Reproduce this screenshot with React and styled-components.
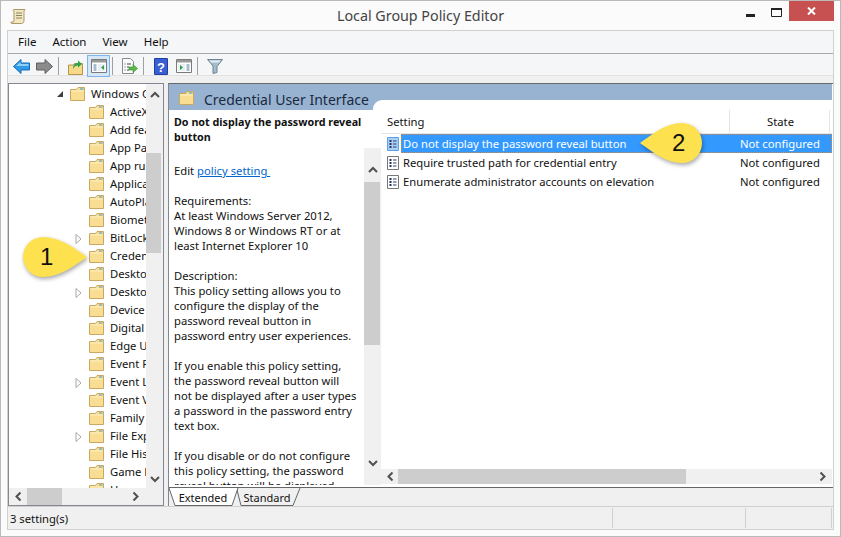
import React from 'react';
import styled, { createGlobalStyle } from 'styled-components';

const GlobalStyle = createGlobalStyle`
  html, body { margin: 0; padding: 0; background: #fff; }
  body { font-family: "Noto Sans", "Open Sans", sans-serif; font-size: 11.25px; color: #111; }
  * { box-sizing: border-box; }
`;

const Window = styled.div`
  position: relative;
  width: 841px;
  height: 537px;
  display: flex;
  flex-direction: column;
  border: 1px solid #bababa;
  background: #fbfbfb;
  overflow: hidden;
`;

const TitleBar = styled.div`
  position: relative;
  height: 29px;
  flex: none;
  display: flex;
  align-items: center;
  justify-content: center;
  font-size: 14.3px;
  color: #444;
`;

const TitleIcon = styled.svg`
  position: absolute;
  left: 9px;
  top: 7px;
`;

const WindowControls = styled.div`
  position: absolute;
  top: 0;
  right: 6px;
  display: flex;
  height: 20px;
`;

const ControlButton = styled.div`
  width: ${p => p.$w}px;
  display: flex;
  align-items: center;
  justify-content: center;
  background: ${p => p.$close ? '#c75050' : 'transparent'};
`;

const Client = styled.div`
  flex: none;
  height: 500px;
  margin: 0 6px;
  display: flex;
  flex-direction: column;
  border: 1px solid #d0d0d0;
  border-bottom: 0;
  background: #f0f0f0;
`;

const MenuBar = styled.div`
  height: 23px;
  flex: none;
  display: flex;
  align-items: center;
  gap: 16px;
  padding: 0 0 2px 10px;
  font-size: 11.5px;
  background: #f5f6f7;
  border-bottom: 1px solid #a9a9a9;
`;

const ToolBar = styled.div`
  height: 22px;
  flex: none;
  display: flex;
  align-items: flex-start;
  padding: 1px 0 0 2px;
  background: #f5f6f7;
  border-bottom: 1px solid #e2e2e2;
`;

const ToolButton = styled.div`
  width: 23px;
  height: 22px;
  flex: none;
  display: flex;
  align-items: center;
  justify-content: center;
  background: ${p => p.$active ? '#d5e6f7' : 'transparent'};
  border: 1px solid ${p => p.$active ? '#7eb4ea' : 'transparent'};
`;

const ToolSep = styled.div`
  width: 1px;
  height: 18px;
  margin: 2px 5px 0 2px;
  background: #a0a0a0;
`;

const Panes = styled.div`
  flex: none;
  height: 423px;
  margin-top: 7px;
  display: flex;
  gap: 4px;
`;

const TreePane = styled.div`
  width: 156px;
  display: flex;
  flex-direction: column;
  border: 1px solid #828790;
  background: #fff;
`;

const TreeBody = styled.div`
  flex: 1;
  min-height: 0;
  display: flex;
`;

const TreeList = styled.div`
  width: 137px;
  overflow: hidden;
  padding-top: 1px;
`;

const TreeRow = styled.div`
  position: relative;
  height: 18px;
  display: flex;
  align-items: center;
  white-space: nowrap;
  padding-left: ${p => p.$root ? 61 : 80}px;
`;

const TreeLabel = styled.span`
  margin-left: 6px;
  line-height: 18px;
`;

const Expander = styled.svg`
  position: absolute;
  left: ${p => p.$root ? 47 : 66}px;
  top: 5px;
`;

const VBar = styled.div`
  position: relative;
  width: ${p => p.$w}px;
  flex: none;
  display: flex;
  flex-direction: column;
  align-items: stretch;
  background: #f0f0f0;
  margin-top: ${p => p.$top || 0}px;
`;

const VArrow = styled.div`
  height: ${p => p.$h}px;
  flex: none;
  display: flex;
  justify-content: center;
  align-items: ${p => p.$align || 'center'};
  padding-top: ${p => p.$shift || 0}px;
  margin-top: ${p => p.$end ? 'auto' : 0};
`;

const VThumb = styled.div`
  flex: none;
  margin-top: ${p => p.$offset}px;
  margin-right: ${p => p.$inset || 0}px;
  height: ${p => p.$h}px;
  background: #cdcdcd;
`;

const HBar = styled.div`
  flex: none;
  height: ${p => p.$h}px;
  display: flex;
  align-items: stretch;
  background: #f0f0f0;
  padding-right: ${p => p.$pad || 0}px;
`;

const HArrow = styled.div`
  width: ${p => p.$w}px;
  flex: none;
  display: flex;
  align-items: center;
  justify-content: center;
  margin-left: ${p => p.$end ? 'auto' : 0};
`;

const HThumb = styled.div`
  width: ${p => p.$w}px;
  flex: none;
  background: #cdcdcd;
`;

const DetailPane = styled.div`
  flex: 1;
  min-width: 0;
  display: flex;
  flex-direction: column;
  background: #fff;
  border-top: 1px solid #696969;
  border-left: 1px solid #828790;
  padding-right: 1px;
`;

const DetailHeader = styled.div`
  position: relative;
  height: 26px;
  flex: none;
  display: flex;
  align-items: center;
  padding: 2px 0 0 10px;
  background: #98b3d1;
  font-size: 14px;
  color: #1b2a3e;
  &::after {
    content: '';
    position: absolute;
    left: 204px;
    right: 0;
    bottom: 0;
    height: 10px;
    background: #fff;
    border-top-left-radius: 9px;
  }
`;

const HeaderTitle = styled.span`
  margin-left: 10px;
  white-space: nowrap;
  position: relative;
  z-index: 1;
  top: 1px;
`;

const DetailBody = styled.div`
  flex: 1;
  min-height: 0;
  display: flex;
`;

const DescColumn = styled.div`
  width: 212px;
  flex: none;
  height: 375px;
  display: flex;
  overflow: hidden;
`;

const DescText = styled.div`
  flex: 1;
  min-width: 0;
  padding: 5px 0 0 5px;
  line-height: 15px;
  white-space: nowrap;
`;

const DescHeading = styled.div`
  font-weight: 700;
  font-size: 10.75px;
  margin-bottom: 18px;
`;

const DescPara = styled.div`
  margin-bottom: 15px;
`;

const PolicyLink = styled.span`
  color: #0066cc;
  text-decoration: underline;
`;

const ListColumn = styled.div`
  flex: 1;
  min-width: 0;
  display: flex;
  flex-direction: column;
  padding-bottom: 3px;
`;

const ListHeader = styled.div`
  height: 24px;
  flex: none;
  display: flex;
  align-items: center;
  border-bottom: 1px solid #e5e5e5;
`;

const SettingHead = styled.div`
  width: 349px;
  height: 100%;
  display: flex;
  align-items: center;
  padding-left: 6px;
  border-right: 1px solid #e5e5e5;
`;

const StateHead = styled.div`
  width: 100px;
  height: 100%;
  display: flex;
  align-items: center;
  justify-content: center;
  padding-left: 2px;
  border-right: 1px solid #e5e5e5;
`;

const Rows = styled.div`
  flex: 1;
  min-height: 0;
`;

const Row = styled.div`
  height: 19px;
  display: flex;
  align-items: center;
  white-space: nowrap;
  padding-left: 6px;
  color: ${p => p.$selected ? '#fff' : '#111'};
`;

const SelectedWrap = styled.div`
  flex: 1;
  min-width: 0;
  height: 100%;
  margin-left: 2px;
  display: flex;
  background: ${p => p.$selected ? '#3399ff' : 'transparent'};
  outline: ${p => p.$selected ? '1px dotted #d98a3a' : 'none'};
  outline-offset: -1px;
`;

const RowName = styled.div`
  flex: none;
  width: 339px;
  padding-left: 2px;
  display: flex;
  align-items: center;
`;

const RowState = styled.div`
  flex: 1;
  min-width: 0;
  display: flex;
  align-items: center;
`;

const TabStrip = styled.div`
  height: 19px;
  flex: none;
  display: flex;
  border-top: 1px solid #666;
  margin: 0 -1px 0 0;
  font-size: 11px;
  background: #f0f0f0;
`;

const Tab = styled.div`
  position: relative;
  width: ${p => p.$w}px;
  height: 18px;
  display: flex;
  align-items: center;
  justify-content: center;
`;

const TabShape = styled.svg`
  position: absolute;
  left: 0;
  top: 0;
`;

const TabLabel = styled.span`
  position: relative;
`;

const StatusBar = styled.div`
  flex: none;
  height: 24px;
  display: flex;
  align-items: center;
  border-top: 1px solid #d0d0d0;
  border-bottom: 1px solid #d0d0d0;
  background: #f0f0f0;
`;

const StatusCell = styled.div`
  width: ${p => p.$w}px;
  height: 20px;
  display: flex;
  align-items: center;
  padding-left: 2px;
  border-right: 1px solid #d0d0d0;
`;

const Callout = styled.div`
  position: absolute;
  left: ${p => p.$x}px;
  top: ${p => p.$y}px;
  width: 72px;
  height: 50px;
`;

const CalloutShape = styled.svg`
  position: absolute;
  left: 0;
  top: 0;
  filter: drop-shadow(1px 2px 2px rgba(0, 0, 0, 0.35));
`;

const CalloutNumber = styled.span`
  position: absolute;
  left: ${p => p.$x}px;
  top: 5px;
  font-family: "Liberation Sans", Arial, sans-serif;
  font-size: 24px;
  line-height: 30px;
  color: #111;
`;

const FolderIcon = () => (
  <svg width="15" height="14" viewBox="0 0 15 14" style={{ flex: 'none', position: 'relative' }}>
    <path d="M.5 13.500V2.500h6L8 .5h6.500v13z" fill="#f9dd92" stroke="#c9a962" />
    <path d="M1.500 3.500h12v1h-12z" fill="#fdf0c4" />
    <path d="M10 1.500h3.500v1H10z" fill="#3f9ddf" />
  </svg>
);

const Chevron = ({ dir }) => {
  const rot = { up: 0, down: 180, left: 270, right: 90 }[dir];
  return (
    <svg width="10" height="7" viewBox="0 0 10 7" style={{ transform: `rotate(${rot}deg)` }}>
      <path d="M1 6l4-4 4 4" fill="none" stroke="#505050" strokeWidth="2" />
    </svg>
  );
};

const ListIcon = ({ selected }) => (
  <svg width="12" height="14" viewBox="0 0 12 14" style={{ flex: 'none' }}>
    <path d="M.5.5h11v13H.5z" fill={selected ? '#a6d0f7' : '#fff'} stroke={selected ? '#5f9fdc' : '#777'} />
    <path d="M2.500 3h2v2h-2zM2.500 6h2v2h-2zM2.500 9h2v2h-2z" fill="#22355c" />
    <path d="M6 3.500h3.500v1H6zM6 6.500h3.500v1H6zM6 9.500h3.500v1H6z" fill="#2f3f62" />
  </svg>
);

const menus = ['File', 'Action', 'View', 'Help'];

const treeItems = [
  { label: 'ActiveX Installer Service' },
  { label: 'Add features to Windows' },
  { label: 'App Package Deployment' },
  { label: 'App runtime' },
  { label: 'Application Compatibility' },
  { label: 'AutoPlay Policies' },
  { label: 'Biometrics' },
  { label: 'BitLocker Drive Encryption', more: true },
  { label: 'Credential User Interface' },
  { label: 'Desktop Gadgets' },
  { label: 'Desktop Window Manager', more: true },
  { label: 'Device and Driver Compat' },
  { label: 'Digital Locker' },
  { label: 'Edge UI' },
  { label: 'Event Forwarding' },
  { label: 'Event Log Service', more: true },
  { label: 'Event Viewer' },
  { label: 'Family Safety' },
  { label: 'File Explorer', more: true },
  { label: 'File History' },
  { label: 'Game Explorer' },
  { label: 'Homegroup' },
];

const settings = [
  { name: 'Do not display the password reveal button', selected: true },
  { name: 'Require trusted path for credential entry' },
  { name: 'Enumerate administrator accounts on elevation' },
];

export default function App() {
  return (
    <>
      <GlobalStyle />
      <Window>
        <TitleBar>
          <TitleIcon width="17" height="17" viewBox="0 0 17 17">
            <path d="M4 1.500h11c-1 1-1 2-1 3v8c0 2-1 3-2.500 3H2c-1 0-1.500-.8-1-1.500h2.500c.5-1 .5-2 .5-3V4c0-1-1-1-1-1.500s.5-1 1-1z" fill="#f3e7bf" stroke="#a8976a" />
            <path d="M6 5h6M6 7.500h6M6 10h6" stroke="#8d8468" />
          </TitleIcon>
          Local Group Policy Editor
          <WindowControls>
            <ControlButton $w={26}>
              <svg width="9" height="3" style={{ marginTop: 8 }}><rect width="9" height="3" fill="#222" /></svg>
            </ControlButton>
            <ControlButton $w={26}>
              <svg width="11" height="9" style={{ marginTop: 2 }}><path d="M.5 1.500h10v7H.5z" fill="none" stroke="#222" /><rect width="11" height="2" fill="#222" /></svg>
            </ControlButton>
            <ControlButton $w={45} $close>
              <svg width="9" height="8" viewBox="0 0 9 8"><path d="M1 .5l7 7M8 .5l-7 7" stroke="#fff" strokeWidth="2" /></svg>
            </ControlButton>
          </WindowControls>
        </TitleBar>
        <Client>
          <MenuBar>
            {menus.map(m => <span key={m}>{m}</span>)}
          </MenuBar>
          <ToolBar>
            <ToolButton>
              <svg width="17" height="15" viewBox="0 0 17 15"><path d="M.5 7.500L8 .5v3.500h8.500v7H8v3.500z" fill="#2f9be8" stroke="#1a6db3" /><path d="M3 7l4.500-4v2h8v2z" fill="#8fd0f7" /></svg>
            </ToolButton>
            <ToolButton>
              <svg width="17" height="15" viewBox="0 0 17 15"><path d="M16.500 7.500L9 .5v3.500H.5v7H9v3.500z" fill="#8b8b8b" stroke="#5f5f5f" /></svg>
            </ToolButton>
            <ToolSep />
            <ToolButton>
              <svg width="15" height="17" viewBox="0 0 15 17"><path d="M.5 16.500V7h5l1-1.500h8v11z" fill="#f7d98a" stroke="#b5954d" /><path d="M5 11c0-4 2-6 5-6V2.500L14 6l-4 3.500V7.500c-2 0-4 1-5 3.500z" fill="#2ea34a" /></svg>
            </ToolButton>
            <ToolButton $active>
              <svg width="16" height="14" viewBox="0 0 16 14"><path d="M.5.5h15v13H.5z" fill="#fff" stroke="#7a7a7a" /><path d="M1 1h14v2.500H1z" fill="#9a9a9a" /><path d="M2.500 5h3v7h-3z" fill="#a6bcd0" /><path d="M7 5h7v7H7z" fill="#e8eef4" /><path d="M13 6v5l-3-2.500z" fill="#2e9d46" /></svg>
            </ToolButton>
            <ToolSep />
            <ToolButton>
              <svg width="17" height="17" viewBox="0 0 17 17"><path d="M1.500.5h8l3 3v12h-11z" fill="#fbfbfb" stroke="#8a8a8a" /><path d="M3.500 6h1M3.500 9h1M3.500 12h1M6 6h4M6 9h2M6 12h2" stroke="#444" /><path d="M8 9h4V6.500l4.500 4-4.500 4V12H8z" fill="#5bb84a" stroke="#3d8f33" strokeWidth=".6" /></svg>
            </ToolButton>
            <ToolSep />
            <ToolButton>
              <svg width="14" height="17" viewBox="0 0 14 17"><rect width="14" height="17" rx="1" fill="#1f3fa8" /><rect x="1" y="1" width="12" height="15" fill="#3a5fd0" /><text x="7" y="13.500" textAnchor="middle" fontFamily="Liberation Sans" fontWeight="700" fontSize="13" fill="#fff">?</text></svg>
            </ToolButton>
            <ToolButton>
              <svg width="16" height="14" viewBox="0 0 16 14"><path d="M.5.5h15v13H.5z" fill="#fff" stroke="#7a7a7a" /><path d="M1 1h14v2.500H1z" fill="#9a9a9a" /><path d="M2 5h7v7H2z" fill="#e8eef4" /><path d="M10.500 5h3v7h-3z" fill="#a6bcd0" /><path d="M4 6v5l3-2.500z" fill="#2e9d46" /></svg>
            </ToolButton>
            <ToolSep />
            <ToolButton>
              <svg width="16" height="15" viewBox="0 0 16 15"><path d="M.5.5h15L10 7.500v6l-4 1v-7.500z" fill="#a5bccb" stroke="#6c8494" /><path d="M2.500 1.500h11l-1.500 2H4z" fill="#e4edf2" /></svg>
            </ToolButton>
          </ToolBar>
          <Panes>
            <TreePane>
              <TreeBody>
                <TreeList>
                  <TreeRow $root>
                    <Expander $root width="8" height="8" viewBox="0 0 8 8"><path d="M7 1v6H1z" fill="#404040" /></Expander>
                    <FolderIcon />
                    <TreeLabel>Windows Components</TreeLabel>
                  </TreeRow>
                  {treeItems.map((item, i) => (
                    <TreeRow key={i}>
                      {item.more && (
                        <Expander width="7" height="10" viewBox="0 0 7 10"><path d="M1 .5l5 4.500-5 4.500z" fill="#fff" stroke="#a6a6a6" /></Expander>
                      )}
                      <FolderIcon />
                      <TreeLabel>{item.label}</TreeLabel>
                    </TreeRow>
                  ))}
                </TreeList>
                <VBar $w={17}>
                  <VArrow $h={20}><Chevron dir="up" /></VArrow>
                  <VThumb $offset={49} $h={100} $inset={2} />
                  <VArrow $h={18} $end><Chevron dir="down" /></VArrow>
                </VBar>
              </TreeBody>
              <HBar $h={17} $pad={18}>
                <HArrow $w={18}><Chevron dir="left" /></HArrow>
                <HThumb $w={35} />
                <HArrow $w={18} $end><Chevron dir="right" /></HArrow>
              </HBar>
            </TreePane>
            <DetailPane>
              <DetailHeader>
                <FolderIcon />
                <HeaderTitle>Credential User Interface</HeaderTitle>
              </DetailHeader>
              <DetailBody>
                <DescColumn>
                  <DescText>
                    <DescHeading>Do not display the password reveal<br />button</DescHeading>
                    <DescPara>Edit <PolicyLink>policy setting&nbsp;</PolicyLink></DescPara>
                    <DescPara>Requirements:<br />At least Windows Server 2012,<br />Windows 8 or Windows RT or at<br />least Internet Explorer 10</DescPara>
                    <DescPara>Description:<br />This policy setting allows you to<br />configure the display of the<br />password reveal button in<br />password entry user experiences.</DescPara>
                    <DescPara>If you enable this policy setting,<br />the password reveal button will<br />not be displayed after a user types<br />a password in the password entry<br />text box.</DescPara>
                    <DescPara>If you disable or do not configure<br />this policy setting, the password<br />reveal button will be displayed</DescPara>
                  </DescText>
                  <VBar $w={17} $top={38}>
                    <VArrow $h={34} $shift={8}><Chevron dir="up" /></VArrow>
                    <VThumb $offset={0} $h={163} $inset={1} />
                    <VArrow $h={25} $end $align="flex-start"><Chevron dir="down" /></VArrow>
                  </VBar>
                </DescColumn>
                <ListColumn>
                  <ListHeader>
                    <SettingHead>Setting</SettingHead>
                    <StateHead>State</StateHead>
                  </ListHeader>
                  <Rows>
                    {settings.map(s => (
                      <Row key={s.name} $selected={s.selected}>
                        <ListIcon selected={s.selected} />
                        <SelectedWrap $selected={s.selected}>
                          <RowName>{s.name}</RowName>
                          <RowState>Not configured</RowState>
                        </SelectedWrap>
                      </Row>
                    ))}
                  </Rows>
                  <HBar $h={15}>
                    <HArrow $w={17}><Chevron dir="left" /></HArrow>
                    <HThumb $w={288} />
                    <HArrow $w={18} $end><Chevron dir="right" /></HArrow>
                  </HBar>
                </ListColumn>
              </DetailBody>
              <TabStrip>
                <Tab $w={68}>
                  <TabShape width="70" height="18" viewBox="0 0 70 18"><path d="M0 0L6 17.500H63L69 0" fill="#fff" stroke="#666" /></TabShape>
                  <TabLabel>Extended</TabLabel>
                </Tab>
                <Tab $w={60}>
                  <TabShape width="64" height="18" viewBox="0 0 64 18"><path d="M0 2L4 17.500H56L63 0" fill="none" stroke="#666" /></TabShape>
                  <TabLabel>Standard</TabLabel>
                </Tab>
              </TabStrip>
            </DetailPane>
          </Panes>
          <StatusBar>
            <StatusCell $w={605}>3 setting(s)</StatusCell>
            <StatusCell $w={133} />
            <StatusCell $w={86} />
          </StatusBar>
        </Client>
        <Callout $x={22} $y={236}>
          <CalloutShape width="72" height="50" viewBox="0 0 72 50">
            <path d="M64 20C50 10 36 0 20 0A20 20 0 0 0 20 40C36 40 50 30 64 20z" fill="#fde14e" />
          </CalloutShape>
          <CalloutNumber $x={17}>1</CalloutNumber>
        </Callout>
        <Callout $x={639} $y={122}>
          <CalloutShape width="72" height="50" viewBox="0 0 72 50">
            <path d="M0 20C14 10 26 0 42 0A20 20 0 0 1 42 40C26 40 14 30 0 20z" fill="#fde14e" />
          </CalloutShape>
          <CalloutNumber $x={32}>2</CalloutNumber>
        </Callout>
      </Window>
    </>
  );
}
